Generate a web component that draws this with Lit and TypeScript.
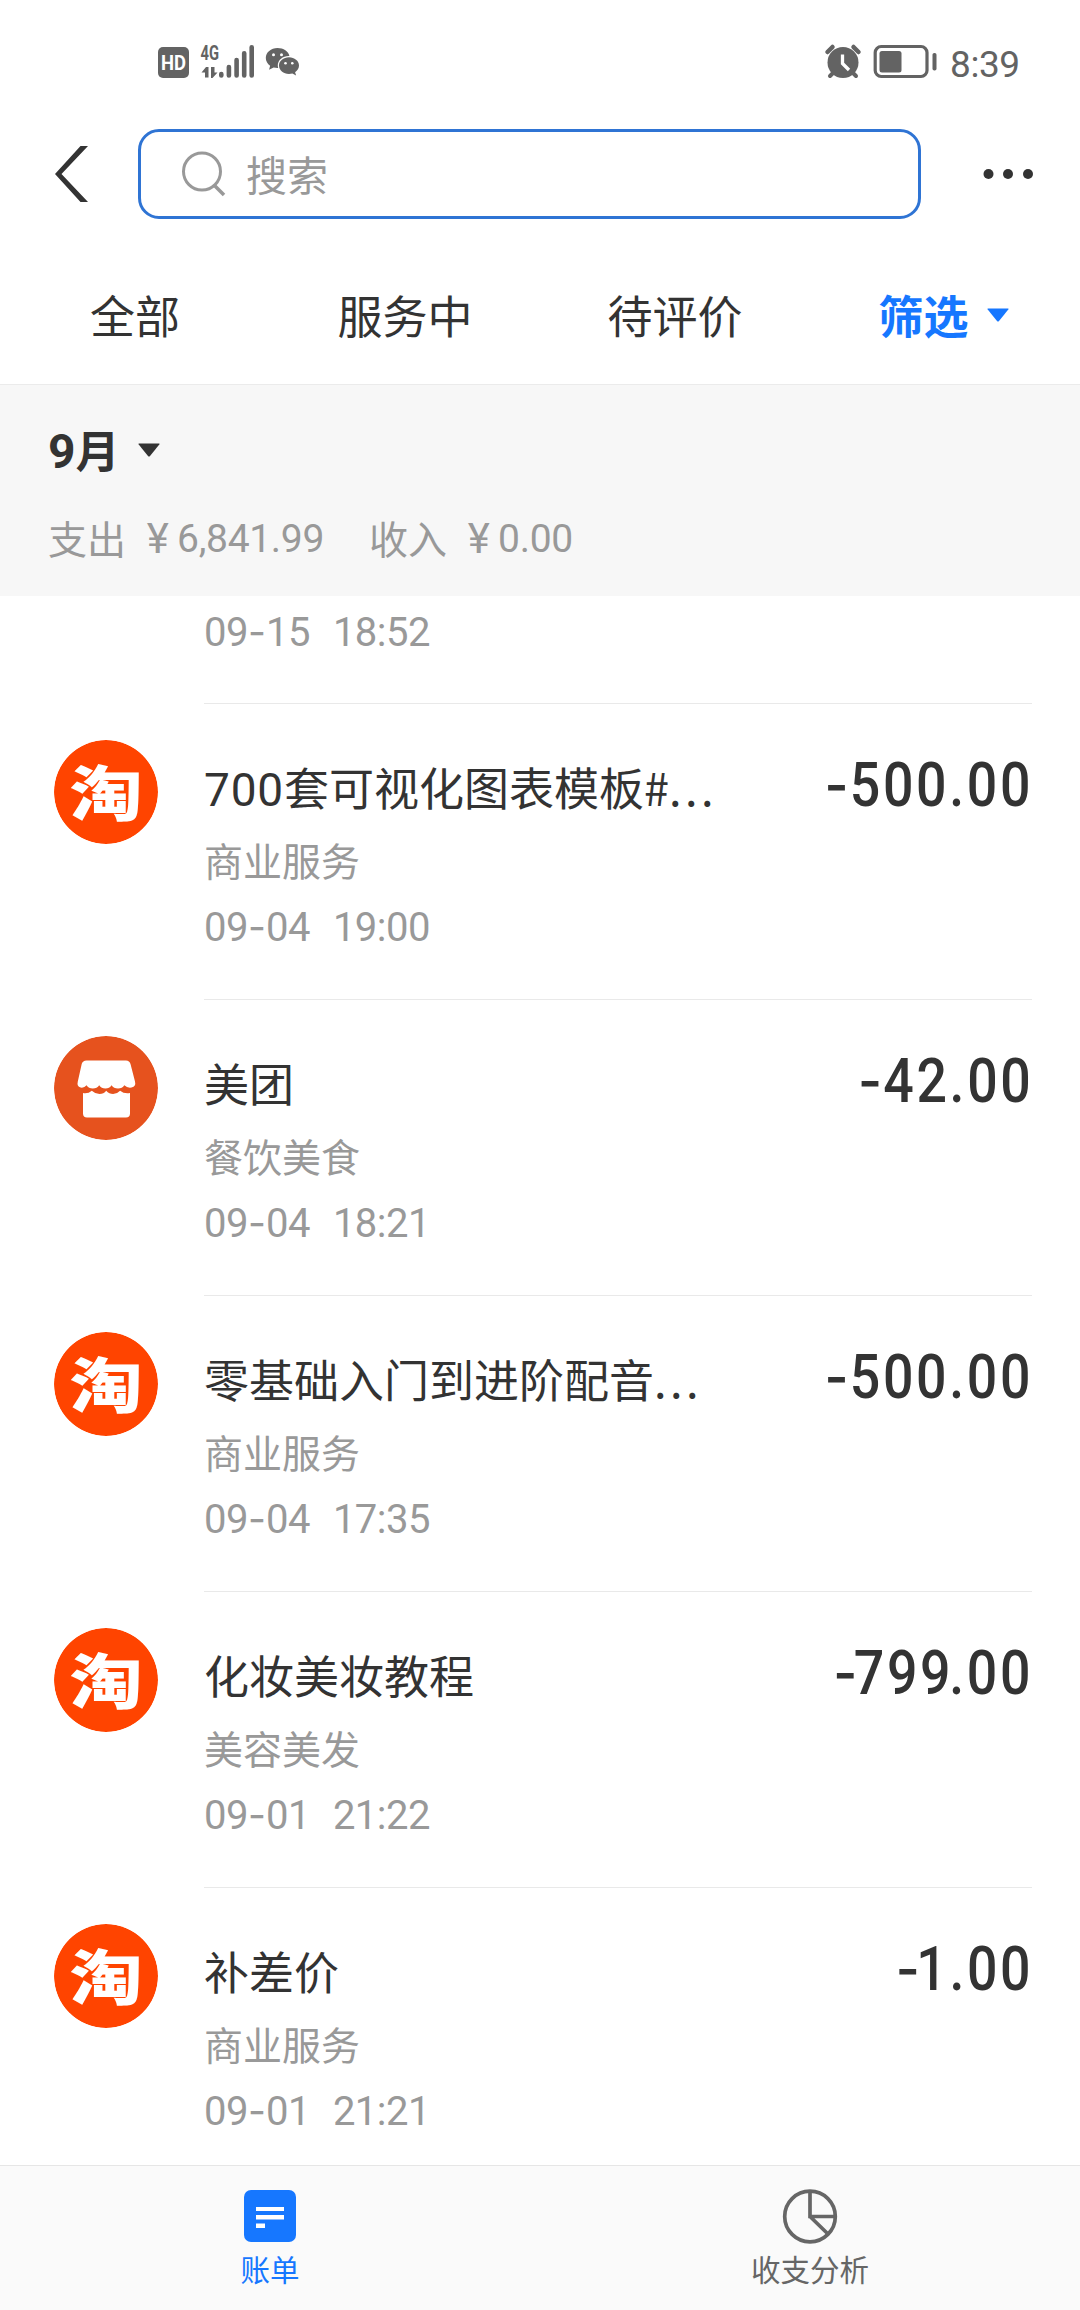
import { LitElement, html, css, svg, nothing } from "lit";
import { customElement, property } from "lit/decorators.js";

interface Bill {
  icon: "taobao" | "shop";
  title: string;
  category: string;
  date: string;
  time: string;
  amount: string;
}

const BILLS: Bill[] = [
  { icon: "taobao", title: "700套可视化图表模板#...", category: "商业服务", date: "09-04", time: "19:00", amount: "500.00" },
  { icon: "shop", title: "美团", category: "餐饮美食", date: "09-04", time: "18:21", amount: "42.00" },
  { icon: "taobao", title: "零基础入门到进阶配音...", category: "商业服务", date: "09-04", time: "17:35", amount: "500.00" },
  { icon: "taobao", title: "化妆美妆教程", category: "美容美发", date: "09-01", time: "21:22", amount: "799.00" },
  { icon: "taobao", title: "补差价", category: "商业服务", date: "09-01", time: "21:21", amount: "1.00" },
];

const whenStyles = css`
  .when { display: flex; gap: 23px; font: 400 40px/50px Roboto, sans-serif; letter-spacing: -0.5px; color: #999; }
  .when .dash { font-family: Inter, sans-serif; font-size: 39px; line-height: 1; letter-spacing: 0; }
`;

const when = (date: string, time: string) => {
  const [month, day] = date.split("-");
  return html`<div class="when"><span>${month}<span class="dash">-</span>${day}</span><span>${time}</span></div>`;
};

@customElement("status-bar")
export class StatusBar extends LitElement {
  static styles = css`
    :host { display: flex; justify-content: space-between; height: 109px; box-sizing: border-box; padding: 41px 59px 0 154px; color: #636363; }
    .group { display: flex; height: 41px; }
    .time { font: 400 37px/41px Roboto, sans-serif; margin-left: 10px; padding-top: 3px; letter-spacing: -0.4px; width: 71px; }
    svg { display: block; }
    .hd { font: 700 20px Roboto, sans-serif; fill: #fff; }
    .net { font: 700 21px Roboto, sans-serif; fill: #636363; }
  `;
  render() {
    return html`
      <div class="group">
        <svg width="150" height="41" viewBox="154 41 150 41" fill="currentColor">
          <rect x="158" y="47" width="31" height="31" rx="5" />
          <text class="hd" x="161" y="70" textLength="25" lengthAdjust="spacingAndGlyphs">HD</text>
          <text class="net" x="200.500" y="60" textLength="18.500" lengthAdjust="spacingAndGlyphs">4G</text>
          <path d="M201.500 72.500l4.500-5.500h2.500V77.500h-3.500V72.500zM211 67h3.500v5.500h3L212.500 78H211z" />
          <g stroke="currentColor" stroke-width="4.600" stroke-linecap="round">
            <path d="M221.300 74v1.500M228.900 67v8.500M236.600 60v15.500M244.200 53.300v22.200M251.700 47.300v28.200" />
          </g>
          <path d="M277.500 48c-6.500 0-11.700 4.400-11.700 10 0 3.200 1.700 5.900 4.300 7.700l-1 4 4.500-2.300c1.300.3 2.600.5 4 .5h.6c-.3-.9-.4-1.700-.4-2.600 0-5.200 5-9.300 10.900-9.300h.7C288.600 51.500 283.500 48 277.500 48z" />
          <path d="M299 65.600c0-4.700-4.600-8.300-10-8.300-5.600 0-10 3.700-10 8.300 0 4.600 4.400 8.300 10 8.300 1.200 0 2.300-.2 3.400-.5l3.700 2-1-3.200c2.400-1.600 3.900-3.900 3.900-6.600z" />
          <g fill="#fff"><circle cx="273.500" cy="54.700" r="1.500" /><circle cx="281.500" cy="54.700" r="1.500" /><circle cx="285.500" cy="63.200" r="1.300" /><circle cx="292.300" cy="63.200" r="1.300" /></g>
        </svg>
      </div>
      <div class="group">
        <svg width="117" height="41" viewBox="823.500 41 117 41" fill="none" stroke="currentColor">
          <circle cx="843.500" cy="62.500" r="15.500" fill="currentColor" stroke="none" />
          <path d="M828 52l5-5M859 52l-5-5" stroke-width="4.500" stroke-linecap="round" />
          <path d="M830.500 76l4-4M856.500 76l-4-4" stroke-width="4" stroke-linecap="round" />
          <path d="M843 54.500v9l6.500 6.500" stroke="#fff" stroke-width="3.300" />
          <rect x="875.700" y="46.500" width="51.800" height="30" rx="6" stroke-width="3.200" />
          <rect x="880" y="51" width="22" height="21.500" rx="2.500" fill="currentColor" stroke="none" />
          <rect x="933" y="53" width="4" height="17.500" rx="1.800" fill="currentColor" stroke="none" />
        </svg>
        <span class="time">8:39</span>
      </div>
    `;
  }
}

@customElement("bill-row")
export class BillRow extends LitElement {
  @property({ attribute: false }) bill!: Bill;

  static styles = [whenStyles, css`
    :host { display: flex; height: 296px; flex: none; padding: 0 48px 0 54px; box-sizing: border-box; }
    .avatar { flex: none; width: 104px; height: 104px; margin: 36px 46px 0 0; border-radius: 50%; overflow: hidden; }
    .avatar svg { display: block; }
    .body { flex: 1; display: flex; flex-direction: column; border-bottom: 1px solid #e9e9e9; padding-top: 53px; }
    .head { display: flex; justify-content: space-between; height: 60px; }
    .title { font-size: 45px; line-height: 60px; color: #333; white-space: nowrap; }
    .num { font-family: Roboto, sans-serif; font-size: 46px; letter-spacing: 0.8px; line-height: 1; }
    .dots { letter-spacing: 3.500px; }
    .category { font-size: 39px; line-height: 50px; margin: 17px 0 19px; color: #999; }
    .amount { font: 500 61px/60px Roboto, sans-serif; letter-spacing: 3px; color: #333; transform: scaleX(0.88); transform-origin: right; margin: -2px -1px 0 0; white-space: nowrap; }
    .minus { font-family: Inter, sans-serif; font-size: 59px; line-height: 1; letter-spacing: 1.500px; }
    .minus.tight { letter-spacing: -4px; }
    .kern { letter-spacing: -1.500px; }
    .tao { font: 900 60px "Noto Sans CJK SC", sans-serif; }
  `];

  private avatar() {
    if (this.bill.icon === "taobao") {
      return svg`<circle cx="52" cy="52" r="52" fill="#ff4400" />
        <text class="tao" x="15.500" y="76" textLength="73" lengthAdjust="spacingAndGlyphs" fill="#fff">淘</text>`;
    }
    return svg`<circle cx="52" cy="52" r="52" fill="#e6521e" />
      <path fill="#fff" d="M32.500 24.500h39.500q3.500 0 4.500 3.500l4.500 17.500q1.300 5-3.500 6-4 .8-7.200-2.300-2 3.300-6.300 3.300t-6.400-3.300q-2.200 3.300-6.200 3.300t-6.200-3.300q-2.200 3.300-6.400 3.300t-6.200-3.300q-2.500 3-6 2.300-4-1-2.800-6l3.900-17.500q1-3.500 4.800-3.500z" />
      <path fill="#fff" d="M29 57q5 1 8.800-2.300 3.500 3.300 7.700 3.300t6.700-3.300q3 3.300 6.900 3.300t7-3.300q4 3.300 9.900 2.300v20.500q0 4-4 4h-39q-4 0-4-4z" />`;
  }

  private title() {
    return this.bill.title
      .split(/(\d+|\.{3})/)
      .filter(Boolean)
      .map((part) =>
        /^\d/.test(part) ? html`<span class="num">${part}</span>`
        : part === "..." ? html`<span class="dots">${part}</span>`
        : part);
  }

  private amount() {
    const { amount } = this.bill;
    const tight = /^[17]/.test(amount) ? "minus tight" : "minus";
    const parts = amount.split(/(9(?=\.))/).map((p) => (p === "9" ? html`<span class="kern">9</span>` : p));
    return html`<div class="amount"><span class=${tight}>-</span>${parts}</div>`;
  }

  render() {
    if (!this.bill) return nothing;
    const { category, date, time } = this.bill;
    return html`
      <div class="avatar"><svg width="104" height="104" viewBox="0 0 104 104">${this.avatar()}</svg></div>
      <div class="body">
        <div class="head"><div class="title">${this.title()}</div>${this.amount()}</div>
        <div class="category">${category}</div>
        ${when(date, time)}
      </div>
    `;
  }
}

@customElement("app-root")
export class AppRoot extends LitElement {
  static styles = [whenStyles, css`
    :host { display: flex; flex-direction: column; height: 2310px; width: 1080px; overflow: hidden; background: #fff; color: #333; font-family: "Noto Sans CJK SC", sans-serif; }
    svg { display: block; }
    .search-bar { flex: none; display: flex; align-items: center; height: 130px; box-sizing: border-box; padding: 0 46px 0 54px; }
    .field { display: flex; align-items: center; box-sizing: border-box; width: 783px; height: 90px; margin-left: 48px; border: 3px solid #2f74d4; border-radius: 21px; padding: 0 0 1px 40px; gap: 19px; color: #999; font-size: 41px; line-height: 60px; }
    .field span { margin-top: -2px; }
    .more { margin-left: auto; }
    .tabs { flex: none; display: grid; grid-template-columns: repeat(4, 1fr); height: 145px; box-sizing: border-box; padding-top: 46px; font-size: 45px; line-height: 60px; text-align: center; }
    .filter { display: flex; justify-content: center; align-items: center; gap: 18px; color: #1677ff; font-weight: 700; height: 60px; padding-right: 3px; }
    .summary { flex: none; height: 212px; box-sizing: border-box; border-top: 1px solid #ebebeb; background: #f7f7f7; padding: 34px 48px 0; }
    .month { display: flex; align-items: center; gap: 18px; height: 60px; font-size: 44px; line-height: 60px; font-weight: 700; }
    .month svg { margin-top: 1px; }
    .month .n { font: 700 48px/1 Roboto, sans-serif; }
    .totals { display: flex; margin-top: 35px; font-size: 39px; line-height: 50px; color: #999; }
    .label { margin-top: -2px; }
    .money { display: flex; font-family: Roboto, sans-serif; letter-spacing: -0.3px; margin: 0 45px 0 12px; }
    .yen { width: 39px; text-align: center; font-size: 42px; }
    .list { flex: 1; min-height: 0; overflow: hidden; display: flex; flex-direction: column; }
    .partial { flex: none; box-sizing: border-box; height: 108px; margin: 0 48px 0 204px; border-bottom: 1px solid #e9e9e9; padding-top: 12px; }
    .nav { flex: none; display: grid; grid-template-columns: 1fr 1fr; height: 145px; box-sizing: border-box; border-top: 1px solid #e6e6e6; background: #fafafa; color: #666; }
    .item { display: flex; flex-direction: column; align-items: center; padding-top: 21px; font-size: 29.500px; line-height: 40px; gap: 1px; }
    .active { color: #1677ff; }
  `];

  render() {
    return html`
      <status-bar></status-bar>
      <div class="search-bar">
        <svg width="36" height="60" viewBox="0 0 36 60"><path d="M26.500 2h7.500L7.500 30 34 58h-7.500L1 30z" fill="#333" /></svg>
        <div class="field">
          <svg width="46" height="46" viewBox="0 0 46 46" fill="none" stroke="#999" stroke-width="3"><circle cx="21" cy="20.500" r="18.500" /><path d="M33.500 34.500l9.500 9.500" stroke-width="3.600" /></svg>
          <span>搜索</span>
        </div>
        <svg class="more" width="51" height="12" viewBox="0 0 51 12" fill="#333"><circle cx="5.500" cy="6" r="5" /><circle cx="25" cy="6" r="5" /><circle cx="45" cy="6" r="5" /></svg>
      </div>
      <div class="tabs">
        <div>全部</div>
        <div>服务中</div>
        <div>待评价</div>
        <div class="filter">筛选<svg width="22" height="14" viewBox="0 0 22 14"><path d="M1 .5h20q1 0 .3 1L12 13q-1 1-2 0L.7 1.500Q0 .5 1 .5z" fill="currentColor" /></svg></div>
      </div>
      <div class="summary">
        <div class="month"><span><span class="n">9</span>月</span><svg width="22" height="14" viewBox="0 0 22 14"><path d="M1 .5h20q1 0 .3 1L12 13q-1 1-2 0L.7 1.500Q0 .5 1 .5z" fill="#333" /></svg></div>
        <div class="totals">
          <span class="label">支出</span><span class="money"><span class="yen">¥</span>6,841.99</span>
          <span class="label">收入</span><span class="money"><span class="yen">¥</span>0.00</span>
        </div>
      </div>
      <div class="list">
        <div class="partial">${when("09-15", "18:52")}</div>
        ${BILLS.map((b) => html`<bill-row .bill=${b}></bill-row>`)}
      </div>
      <div class="nav">
        <div class="item active">
          <svg width="60" height="60" viewBox="0 0 60 60"><rect x="4" y="3" width="52" height="52" rx="7" fill="#1677ff" /><path d="M16 20h28v4H16zM16 28h28v4.500H16zM16 36.500h9V41h-9z" fill="#fff" /></svg>
          <span>账单</span>
        </div>
        <div class="item">
          <svg width="60" height="60" viewBox="0 0 60 60" fill="none" stroke="#666" stroke-width="3.700"><circle cx="30" cy="29.500" r="25.300" /><path d="M30 4v25.500h25M30 29.500l18 17.500" /></svg>
          <span>收支分析</span>
        </div>
      </div>
    `;
  }
}
